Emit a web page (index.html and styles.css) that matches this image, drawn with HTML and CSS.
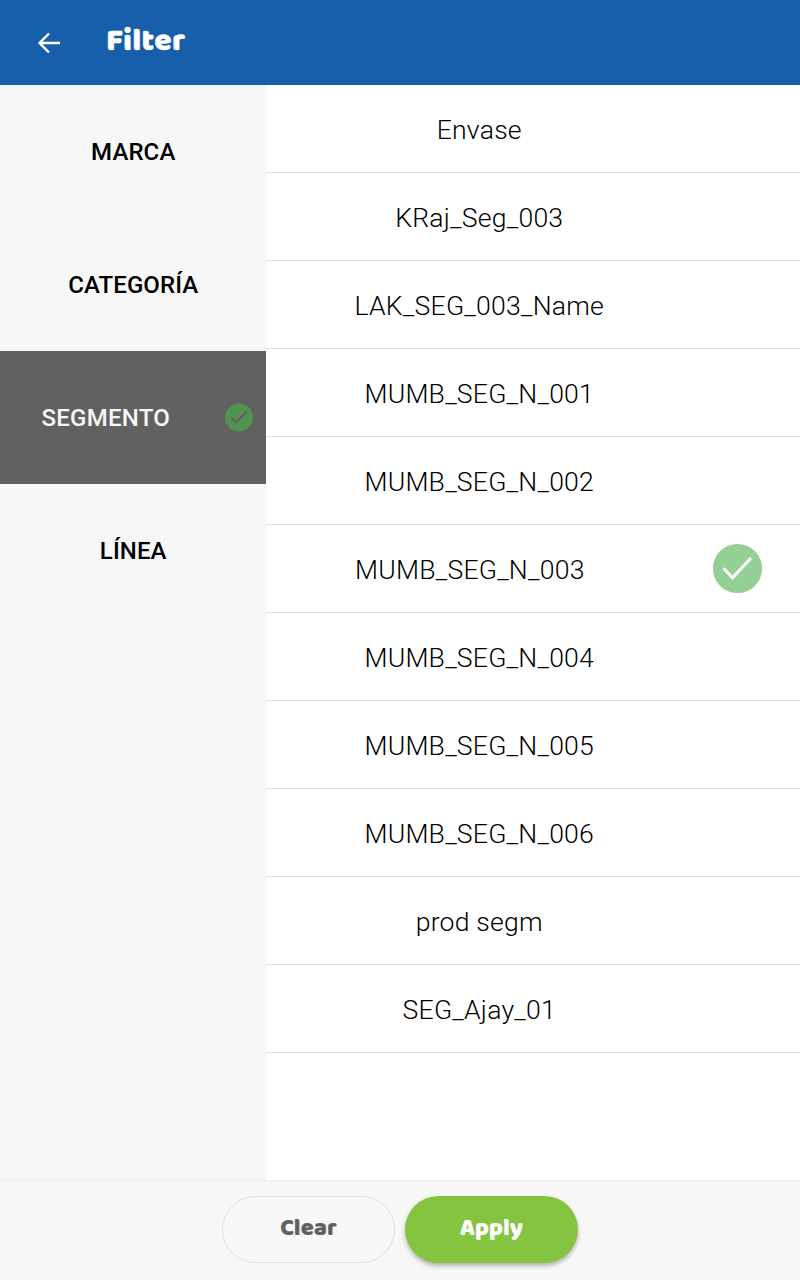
FILE: index.html
```html
<!DOCTYPE html>
<html lang="es">
<head>
<meta charset="utf-8">
<title>Filter</title>
<link rel="stylesheet" href="styles.css">
</head>
<body>
<header class="bar">
  <svg class="back" viewBox="0 0 24 24"><path d="M23 12H3M12 2.500L2.500 12l9.500 9.500"/></svg>
  <h1 class="title">Filter</h1>
</header>
<main class="content">
  <nav class="tabs">
    <div class="tab"><span>MARCA</span></div>
    <div class="tab"><span>CATEGORÍA</span></div>
    <div class="tab active"><span class="tab-label">SEGMENTO</span>
      <svg class="tab-check" viewBox="0 0 28 28"><circle cx="14" cy="13.500" r="14"/><path d="M6.500 13.700l4.500 4.800L21.800 7.500"/></svg>
    </div>
    <div class="tab"><span>LÍNEA</span></div>
  </nav>
  <section class="list">
    <div class="row"><span>Envase</span></div>
    <div class="row"><span>KRaj_Seg_003</span></div>
    <div class="row"><span>LAK_SEG_003_Name</span></div>
    <div class="row"><span>MUMB_SEG_N_001</span></div>
    <div class="row"><span>MUMB_SEG_N_002</span></div>
    <div class="row selected"><span>MUMB_SEG_N_003</span>
      <svg class="row-check" viewBox="0 0 50 50"><circle cx="25.500" cy="24.500" r="24.600"/><path d="M11.500 24.200l9 9.500L39 14"/></svg>
    </div>
    <div class="row"><span>MUMB_SEG_N_004</span></div>
    <div class="row"><span>MUMB_SEG_N_005</span></div>
    <div class="row"><span>MUMB_SEG_N_006</span></div>
    <div class="row"><span>prod segm</span></div>
    <div class="row"><span>SEG_Ajay_01</span></div>
  </section>
</main>
<footer class="footer">
  <button class="btn clear"><span>Clear</span></button>
  <button class="btn apply"><span>Apply</span></button>
</footer>
</body>
</html>
```
FILE: styles.css
```css
* { box-sizing: border-box; }
body { margin: 0; width: 800px; height: 1280px; display: flex; flex-direction: column; font-family: Roboto, sans-serif; background: #fff; color: #000; overflow: hidden; }
.bar { height: 85px; flex: none; background: #185fab; color: #fff; display: flex; align-items: center; padding-left: 37px; }
.back { width: 24px; height: 24px; fill: none; stroke: #fff; stroke-width: 2.4; }
.title { margin: 0 0 1px 45px; font: 900 32px/40px "Baloo 2", Lato, sans-serif; letter-spacing: 0.2px; -webkit-text-stroke: 0.3px currentColor; }
.content { flex: 1; display: flex; min-height: 0; }
.tabs { width: 266px; background: #f7f7f7; }
.tab { height: 133px; display: flex; align-items: center; justify-content: center; padding-left: 0.500px; font-size: 24px; font-weight: 500; letter-spacing: 0.1px; }
.active { background: #616161; color: #f7f7f7; justify-content: flex-start; padding-left: 41.500px; letter-spacing: 0.25px; }
.tab-label { width: 183.500px; }
.tab-check { width: 28px; height: 28px; fill: #529352; overflow: visible; }
.tab-check path { fill: none; stroke: #616161; stroke-width: 2; }
.list { flex: 1; }
.row { height: 88px; border-bottom: 1px solid #dedede; display: flex; align-items: center; justify-content: center; padding: 2px 107.500px 0 0; font-size: 26.600px; line-height: 30px; font-weight: 300; letter-spacing: 0.22px; }
.selected { justify-content: space-between; padding: 2px 38px 0 89px; }
.row-check { width: 50px; height: 50px; margin-top: -2px; fill: #94d095; overflow: visible; }
.row-check path { fill: none; stroke: #fff; stroke-width: 3; }
.footer { height: 100px; flex: none; background: #f7f7f7; border-top: 1px solid #eee; display: flex; justify-content: center; gap: 10px; padding-top: 15px; }
.btn { width: 173px; height: 67px; border-radius: 34px; border: 1px solid #dedede; background: #f8f8f8; color: #616161; font: 900 23.800px/30px "Baloo 2", Lato, sans-serif; letter-spacing: 0.1px; -webkit-text-stroke: 0.2px currentColor; padding: 0 0 3px; }
.apply { border: 0; background: #84c441; color: #fff; box-shadow: 0 3px 4px rgba(0,0,0,.28); }
```
